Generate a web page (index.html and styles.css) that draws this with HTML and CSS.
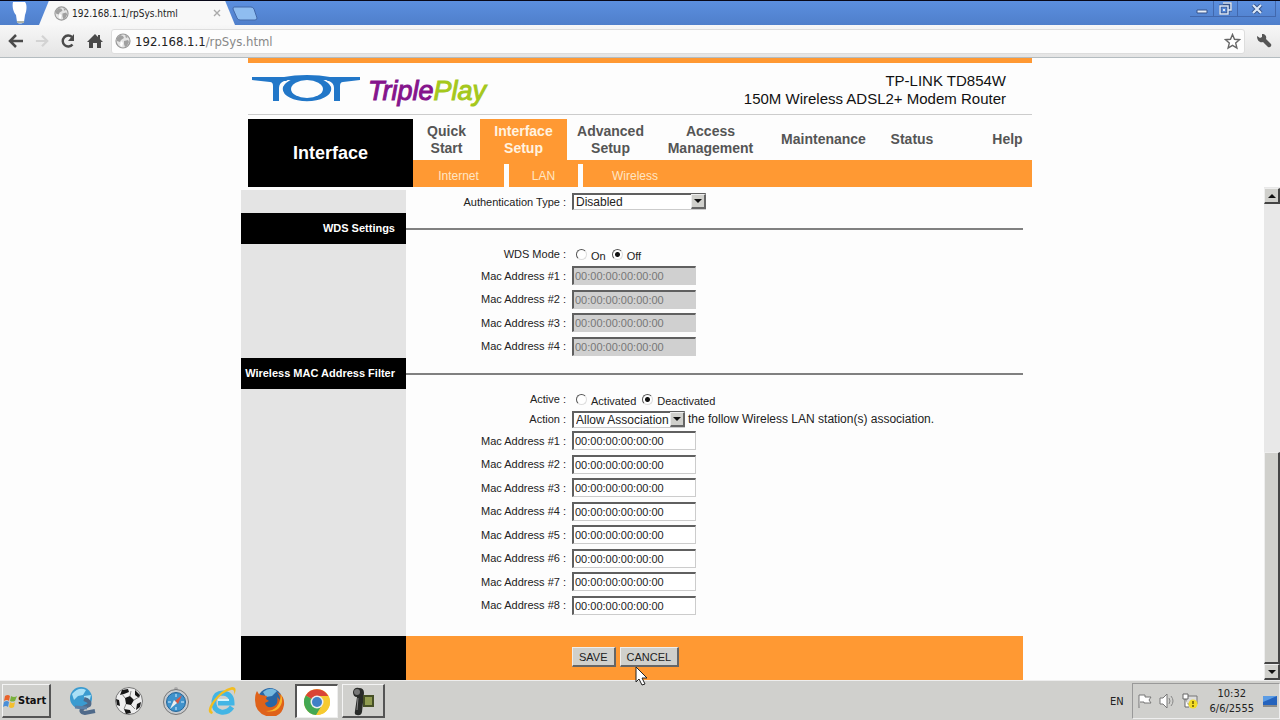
FILE: index.html
```
<!DOCTYPE html>
<html lang="en">
<head>
  <meta charset="UTF-8">
  <meta name="viewport" content="width=device-width, initial-scale=1.0">
  <title>192.168.1.1/rpSys.html</title>
  <link rel="stylesheet" href="styles.css">
</head>
<body>
  <svg class="defs" width="0" height="0" aria-hidden="true">
    <symbol id="globe" viewBox="0 0 16 16">
      <circle cx="8" cy="8" r="7" fill="#e4e4e4" stroke="#999" stroke-width="1.2"/>
      <path d="M2 5l3-3 3 1 1 2-3 2-1 2-3-1zM9 8l4-1 1 2-2 4-2 1-1-3zM10 2l3 2-2 1z" fill="#a0a0a0"/>
      <path d="M6 8l2 2-1 4-2-2z" fill="#fff"/>
    </symbol>
  </svg>

  <!-- Browser -->
  <div class="titlebar">
    <svg class="profile" width="18" height="23" viewBox="0 0 18 23"><path d="M2 1h12c2 2 2 8 0 13l-1 7c-2 2-6 2-7 0L5 14C2 11 1 5 2 1z" fill="#fff"/><path d="M6 20h7v2H6z" fill="#b0b5aa"/></svg>
    <div class="tab">
      <svg width="15" height="15"><use href="#globe"/></svg>
      <span class="tab-title">192.168.1.1/rpSys.html</span>
      <button class="tab-close" aria-label="Close tab"><svg width="8" height="8" viewBox="0 0 8 8"><path d="M1 1l6 6M7 1L1 7" stroke="#aaa" stroke-width="1.4"/></svg></button>
    </div>
    <button class="new-tab" aria-label="New tab"><svg width="26" height="15" viewBox="0 0 26 15"><path d="M2 1h17q2 0 3 2l3 9q0 2-2 2H8q-2 0-3-2L1 3q0-2 1-2z" fill="#8fbdf0" stroke="#4268a8"/></svg></button>
    <div class="window-buttons">
      <button aria-label="Minimize"><svg width="12" height="12" viewBox="0 0 12 12"><path d="M1 7h10v3H1z" fill="#e8f0fa" stroke="#36538a"/></svg></button>
      <button aria-label="Restore"><svg width="13" height="13" viewBox="0 0 13 13"><path d="M4 1h8v7H9M1 4h8v8H1z" fill="none" stroke="#36538a" stroke-width="3"/><path d="M4 1h8v7H9M1 4h8v8H1z" fill="none" stroke="#dce8f8" stroke-width="1.5"/><path d="M4 7h2v2H4z" fill="#dce8f8"/></svg></button>
      <button class="wide" aria-label="Close"><svg width="12" height="10" viewBox="0 0 12 10"><path d="M2 1l8 8M10 1L2 9" stroke="#36538a" stroke-width="4"/><path d="M2 1l8 8M10 1L2 9" stroke="#dce8f8" stroke-width="2.2"/></svg></button>
    </div>
  </div>
  <div class="toolbar">
    <button aria-label="Back"><svg width="16" height="14" viewBox="0 0 16 14"><path d="M8 1L2 7l6 6M2 7h13" fill="none" stroke="#4a4a4a" stroke-width="2.5"/></svg></button>
    <button aria-label="Forward"><svg width="14" height="14" viewBox="0 0 16 14"><path d="M8 1l6 6-6 6M14 7H1" fill="none" stroke="#d3d3d3" stroke-width="2.5"/></svg></button>
    <button aria-label="Reload"><svg width="16" height="16" viewBox="0 0 16 16"><path d="M12.500 11.500A5.500 5.500 0 1 1 12 4" fill="none" stroke="#4a4a4a" stroke-width="2.400"/><path d="M14 1v7H8z" fill="#4a4a4a"/></svg></button>
    <button aria-label="Home"><svg width="16" height="16" viewBox="0 0 16 16"><path d="M8 1L0 9h2v6h4v-5h4v5h4V9h2l-3-3V2h-2v2z" fill="#4a4a4a"/></svg></button>
    <div class="omnibox">
      <svg width="16" height="16"><use href="#globe"/></svg>
      <span class="url">192.168.1.1<span class="path">/rpSys.html</span></span>
      <button aria-label="Bookmark"><svg width="17" height="17" viewBox="0 0 17 17"><path d="M8.500 1.500l2 4.800 5 .4-3.800 3.400 1.200 5-4.400-2.700-4.400 2.700 1.200-5L1.500 6.700l5-.4z" fill="#fff" stroke="#666" stroke-width="1.400"/></svg></button>
    </div>
    <button class="wrench" aria-label="Settings"><svg width="16" height="16" viewBox="0 0 16 16"><path d="M1 3l3 2 2-1V1c3 0 5 2 4 5l5 5c1 2-1 4-3 3L7 9C4 10 1 8 1 3z" fill="#555"/></svg></button>
  </div>

  <!-- Router page -->
  <header class="masthead">
    <div class="brand">
      <svg class="logo" width="110" height="28" viewBox="0 0 110 28" role="img" aria-label="TOT">
        <path d="M1 2h108v3L92 7q-3 0-3 4v15h-6V13q0-5-5-7H33q-5 2-5 7v13h-6V11q0-4-3-4L1 5z" fill="#2277c8"/>
        <ellipse cx="56" cy="14" rx="25" ry="13" fill="#2277c8" stroke="#fdfdfd" stroke-width="1.500"/>
        <path d="M33 2q10-2 23-2t23 2l-4 3H37z" fill="#2277c8"/>
        <ellipse cx="56" cy="14" rx="16" ry="9" fill="#fdfdfd"/>
      </svg>
      <span class="tripleplay"><span class="triple">Triple</span><span class="play">Play</span></span>
      <p class="model">TP-LINK TD854W<br>150M Wireless ADSL2+ Modem Router</p>
    </div>
    <div class="nav">
      <h1>Interface</h1>
      <div class="nav-menus">
        <nav class="menu">
          <a href="#" class="quick">Quick<br>Start</a>
          <a href="#" class="active">Interface<br>Setup</a>
          <a href="#">Advanced<br>Setup</a>
          <a href="#" class="large">Access<br>Management</a>
          <a href="#" class="large">Maintenance</a>
          <a href="#" class="status">Status</a>
          <a href="#" class="help">Help</a>
        </nav>
        <nav class="submenu">
          <a href="#" class="internet">Internet</a>
          <a href="#" class="lan">LAN</a>
          <a href="#" class="wireless">Wireless</a>
        </nav>
      </div>
    </div>
  </header>

  <div class="frame">
    <form class="settings">
      <div class="section">
        <div class="row auth">
          <label for="auth">Authentication Type :</label>
          <span class="drop auth-type"><select id="auth"><option>Disabled</option></select><i></i></span>
        </div>
      </div>

      <h2><span>WDS Settings</span></h2>
      <div class="section">
        <div class="row">
          <span class="label">WDS Mode :</span>
          <label class="choice"><input type="radio" name="wds"><span>On</span></label>
          <label class="choice"><input type="radio" name="wds" checked><span>Off</span></label>
        </div>
        <div class="macs">
          <div class="row"><label for="wds1">Mac Address #1 :</label><input type="text" id="wds1" value="00:00:00:00:00:00" disabled></div>
          <div class="row"><label for="wds2">Mac Address #2 :</label><input type="text" id="wds2" value="00:00:00:00:00:00" disabled></div>
          <div class="row"><label for="wds3">Mac Address #3 :</label><input type="text" id="wds3" value="00:00:00:00:00:00" disabled></div>
          <div class="row"><label for="wds4">Mac Address #4 :</label><input type="text" id="wds4" value="00:00:00:00:00:00" disabled></div>
        </div>
      </div>

      <h2><span>Wireless MAC Address Filter</span></h2>
      <div class="section filter">
        <div class="row">
          <span class="label">Active :</span>
          <label class="choice"><input type="radio" name="filter"><span>Activated</span></label>
          <label class="choice"><input type="radio" name="filter" checked><span>Deactivated</span></label>
        </div>
        <div class="row">
          <label for="action">Action :</label>
          <span class="drop action-type"><select id="action"><option>Allow Association</option></select><i></i></span>
          <span class="note">the follow Wireless LAN station(s) association.</span>
        </div>
        <div class="macs">
          <div class="row"><label for="mac1">Mac Address #1 :</label><input type="text" id="mac1" value="00:00:00:00:00:00"></div>
          <div class="row"><label for="mac2">Mac Address #2 :</label><input type="text" id="mac2" value="00:00:00:00:00:00"></div>
          <div class="row"><label for="mac3">Mac Address #3 :</label><input type="text" id="mac3" value="00:00:00:00:00:00"></div>
          <div class="row"><label for="mac4">Mac Address #4 :</label><input type="text" id="mac4" value="00:00:00:00:00:00"></div>
          <div class="row"><label for="mac5">Mac Address #5 :</label><input type="text" id="mac5" value="00:00:00:00:00:00"></div>
          <div class="row"><label for="mac6">Mac Address #6 :</label><input type="text" id="mac6" value="00:00:00:00:00:00"></div>
          <div class="row"><label for="mac7">Mac Address #7 :</label><input type="text" id="mac7" value="00:00:00:00:00:00"></div>
          <div class="row"><label for="mac8">Mac Address #8 :</label><input type="text" id="mac8" value="00:00:00:00:00:00"></div>
        </div>
      </div>

      <div class="actions">
        <button type="button">SAVE</button>
        <button type="button">CANCEL</button>
      </div>
    </form>
    <div class="scrollbar">
      <button class="up" aria-label="Scroll up"></button>
      <div class="track"><div class="thumb"></div></div>
      <button class="down" aria-label="Scroll down"></button>
    </div>
  </div>

  <!-- Taskbar -->
  <div class="taskbar">
    <button class="start"><svg width="14" height="14" viewBox="0 0 14 14"><path d="M2 2q3-2 5 0L6 7Q4 5 1 7z" fill="#e8622a"/><path d="M8 2q3 2 6 0l-2 5q-3 1-5 0z" fill="#79b03c"/><path d="M1 8q3-2 5 0l-1 5q-2-2-5 0z" fill="#4a8fd8"/><path d="M7 8q3 2 5 0l-1 5q-3 2-5 0z" fill="#f4bf2e"/></svg>Start</button>
    <button class="app" aria-label="Network"><svg width="30" height="30" viewBox="0 0 30 30"><circle cx="14" cy="12" r="11" fill="#3a9bd0"/><path d="M5 8q7-8 14-4l-3 5-5 1-4 4zM17 10l7-1-2 8-5-3z" fill="#a9e0f6"/><path d="M17 13q7 2 5 6l-6 3q-4 4 2 5l10-2" fill="none" stroke="#4f6a8a" stroke-width="4"/><path d="M8 21l12 1" stroke="#5b7fa5" stroke-width="3"/></svg></button>
    <button class="app" aria-label="Football"><svg width="30" height="30" viewBox="0 0 30 30"><circle cx="15" cy="15" r="13.500" fill="#eee" stroke="#777"/><path d="M11 12l5-2 4 4-3 5-5-1zM8 4l6-1 1 3-5 2-4 1zM21 4l5 5-1 3-4-3zM2 13l3 1 1 6-3-1zM10 23l6 1 1 3-5 1zM23 18l4-2-1 5-4 3z" fill="#161616"/><path d="M11 12L8 8M16 10l1-5M20 14l5-3M17 19l4 4M12 18l-2 5" stroke="#888"/></svg></button>
    <button class="app" aria-label="Safari"><svg width="30" height="30" viewBox="0 0 30 30"><circle cx="15" cy="3" r="2" fill="#aaa"/><circle cx="15" cy="16" r="12.500" fill="#c7cbd0" stroke="#777"/><circle cx="15" cy="16" r="9.500" fill="#3e92cc" stroke="#246699"/><path d="M15 8v3M15 21v3M7 16h3M20 16h3" stroke="#d7f0ff"/><path d="M21 9l-4 9-3-3z" fill="#d75745"/><path d="M9 23l4-9 3 3z" fill="#eee"/></svg></button>
    <button class="app" aria-label="Internet Explorer"><svg width="32" height="30" viewBox="0 0 32 30"><path d="M25 21Q21 27 14 26 6 24 7 15 8 7 16 7q9 1 9 10H11" fill="none" stroke="#42b5e5" stroke-width="5"/><path d="M11 14h11" stroke="#d2f4ff" stroke-width="2"/><path d="M5 28Q-2 26 6 15 15 3 25 1q6 0 2 8 1-6-3-5Q15 6 8 16 2 25 6 26z" fill="#f3bd20"/></svg></button>
    <button class="app" aria-label="Firefox"><svg width="30" height="30" viewBox="0 0 30 30"><circle cx="15" cy="14" r="12" fill="#2866a5"/><path d="M8 6q7-6 14-1l-5 5-6 1z" fill="#76b9df"/><path d="M2 5q1 3 4 4l6 1-1 3 3 2-4 2q1 5 7 4 7-2 5-10l3 3q0-5-3-8 8 4 7 13-2 12-14 12Q0 28 0 14q0-6 2-9z" fill="#df621a"/><path d="M26 8q3 8-2 14-5 5-13 3 14 0 15-17z" fill="#f8b52b"/></svg></button>
    <button class="app current" aria-label="Chrome"><svg width="28" height="28" viewBox="0 0 28 28"><circle cx="14" cy="14" r="13" fill="#f6ca30"/><path d="M14 14L2.700 7.500A13 13 0 0 1 25.300 8z" fill="#da4436"/><path d="M14 14L2.700 7.500A13 13 0 0 0 13 27l6-10z" fill="#43a853"/><path d="M14 8h11.500A13 13 0 0 1 14 27l6-11z" fill="#f6ca30"/><circle cx="14" cy="14" r="6.500" fill="#eee"/><circle cx="14" cy="14" r="5" fill="#407fc7"/></svg></button>
    <button class="app open" aria-label="Camcorder"><svg width="30" height="30" viewBox="0 0 30 30"><path d="M5 6q1-5 6-4 5 0 5 5l-2 19q-1 4-5 3-3 0-2-4L9 11q-4 0-4-5z" fill="#292b29"/><circle cx="9" cy="6" r="3" fill="#777"/><path d="M15 9h11v12H15z" fill="#465026"/><path d="M17 11h7v8h-7z" fill="#8f9b50"/><path d="M10 12l-1 12" stroke="#888"/></svg></button>
    <span class="lang">EN</span>
    <div class="tray">
      <svg width="16" height="16" viewBox="0 0 16 16"><path d="M2 15V2h6v2h6l-2 3 2 3H7V9H3" fill="#fff" stroke="#777"/></svg>
      <svg width="17" height="16" viewBox="0 0 17 16"><path d="M1 5h3l4-4v14l-4-4H1z" fill="#fff" stroke="#777"/><path d="M10 5q2 3 0 6M12 3q4 5 0 10" fill="none" stroke="#888"/></svg>
      <svg width="17" height="16" viewBox="0 0 17 16"><path d="M4 3h11v8H4z" fill="#ddd" stroke="#777"/><path d="M1 1h5v5H1zM3 6v8h4" fill="#fff" stroke="#666"/><circle cx="11" cy="11" r="4.500" fill="#f2dc27"/><path d="M11 8v3M11 12v2" stroke="#6a5a00" stroke-width="1.500"/></svg>
      <div class="clock">10:32<br>6/6/2555</div>
      <svg width="15" height="13" viewBox="0 0 15 13"><path d="M1 1h14v9H1z" fill="#2563bd"/><path d="M1 1h14L1 7z" fill="#5b9ce5"/><path d="M1 11h14" stroke="#444"/></svg>
    </div>
  </div>

  <svg class="pointer" width="13" height="21" viewBox="0 0 13 21"><path d="M1 1v15l3-3 3 6 3-1-3-6h5z" fill="#fff" stroke="#222"/></svg>
</body>
</html>
```
FILE: styles.css
```
/* Global Styles */
* {
  box-sizing: border-box;
}

body {
  margin: 0;
  height: 100vh;
  display: flex;
  flex-direction: column;
  overflow: hidden;
  background: #fdfdfd;
  color: #222;
  font-family: "Liberation Sans", Arial, sans-serif;
  font-size: 12px;
}

button {
  padding: 0;
  border: 0;
  background: none;
  font: inherit;
  color: inherit;
}

svg {
  display: block;
  flex: none;
}

.defs {
  position: absolute;
}

/* Browser */
.titlebar {
  display: flex;
  height: 25px;
  flex: none;
  border-top: 1px solid #080818;
  background: linear-gradient(#5b8fdf, #4f7fcb);
  font-family: "DejaVu Sans Condensed", "DejaVu Sans", sans-serif;
}

.profile {
  margin: 0 10px 0 11px;
}

.tab {
  display: flex;
  align-items: center;
  width: 196px;
  padding: 0 14px 0 15px;
  background: #f8f8f8;
  clip-path: polygon(5% 0, 95% 0, 100% 100%, 0 100%);
}

.tab-title {
  flex: 1;
  padding-left: 3px;
  font-size: 10px;
}

.new-tab {
  align-self: flex-start;
  margin: 5px 0 0 -3px;
}

.window-buttons {
  display: flex;
  align-self: flex-start;
  margin: 0 4px 0 auto;
}

.window-buttons button {
  display: flex;
  justify-content: center;
  align-items: center;
  width: 24px;
  height: 16px;
  border: 1px solid #4268ad;
  border-top: 0;
  border-left-width: 0;
}

.window-buttons .wide {
  width: 38px;
}

.toolbar {
  display: flex;
  align-items: center;
  gap: 11px;
  height: 33px;
  flex: none;
  padding: 0 8px;
  border-bottom: 1px solid #b4bcc0;
  background: linear-gradient(#f7f7f7, #e4e4e4);
}

.omnibox {
  display: flex;
  align-items: center;
  flex: 1;
  height: 25px;
  margin-left: -3px;
  padding: 0 3px;
  border: 1px solid #ddd;
  border-radius: 3px;
  background: #fdfdfd;
}

.url {
  flex: 1;
  padding-left: 4px;
  font-family: "DejaVu Sans Condensed", "DejaVu Sans", sans-serif;
  font-size: 13px;
}

.path {
  color: #888;
}

/* Page header */
.masthead {
  width: 100%;
  max-width: 784px;
  flex: none;
  margin: 0 auto;
  border-top: 5px solid #ff9933;
}

.brand {
  display: flex;
  align-items: center;
  height: 52px;
  margin-bottom: 4px;
  padding: 0 26px 0 3px;
  border-bottom: 1px solid #ccc;
}

.tripleplay {
  padding: 6px 0 0 7px;
  font-size: 27px;
  font-style: italic;
  -webkit-text-stroke: 1px;
}

.triple {
  color: #85148c;
}

.play {
  color: #a5c81c;
}

.model {
  margin: 2px 0 0 auto;
  color: #111;
  font-size: 15px;
  line-height: 18px;
  text-align: right;
}

.nav {
  display: flex;
}

.nav h1 {
  display: flex;
  align-items: center;
  justify-content: center;
  width: 165px;
  margin: 0;
  background: #000;
  color: #fff;
  font-size: 18px;
}

.nav-menus {
  flex: 1;
}

.nav a {
  text-decoration: none;
}

.menu {
  display: flex;
  height: 41px;
}

.menu a {
  display: flex;
  align-items: center;
  justify-content: center;
  width: 87px;
  color: #555;
  font-size: 14px;
  font-weight: bold;
  line-height: 17px;
  text-align: center;
}

.menu .quick {
  width: 67px;
}

.menu .large {
  width: 113px;
}

.menu .status {
  width: 64px;
}

.menu .help {
  margin-left: auto;
  width: 49px;
}

.menu .active {
  background: #ff9933;
  color: #fff3e0;
}

.submenu {
  display: flex;
  height: 27px;
  padding-top: 4px;
  background: #ff9933;
}

.submenu a {
  padding-top: 5px;
  color: #ffe6c4;
  text-align: center;
}

.submenu .internet {
  width: 96px;
  border-right: 5px solid #fdfdfd;
}

.submenu .lan {
  width: 74px;
  border-right: 5px solid #fdfdfd;
}

.submenu .wireless {
  width: 104px;
}

/* Settings form */
.frame {
  display: flex;
  flex: 1;
  min-height: 0;
}

.settings {
  display: flex;
  flex-direction: column;
  flex: 1;
  max-width: 782px;
  margin: 0 auto;
  padding-top: 3px;
}

.section {
  border-left: 165px solid #e4e4e4;
}

.filter {
  padding-bottom: 19px;
}

.settings h2 {
  display: flex;
  align-items: center;
  margin: 0;
  color: #fff;
  font-size: 11px;
}

.settings h2 span {
  width: 165px;
  padding-right: 11px;
  background: #000;
  line-height: 31px;
  text-align: right;
  white-space: nowrap;
}

.settings h2::after {
  content: "";
  flex: 1;
  border-top: 2px solid #808080;
}

.row {
  display: flex;
  align-items: center;
  height: 20px;
}

.row.auth {
  height: 23px;
}

.macs .row {
  height: 23px;
}

.macs .row:nth-child(even) {
  height: 24px;
}

.row > label:first-child,
.label {
  width: 160px;
  margin-right: 6px;
  font-size: 11px;
  text-align: right;
}

.row input[type="text"] {
  width: 124px;
  height: 19px;
  padding: 0 1px;
  border: 1px solid #ccc;
  border-top: 2px solid #606060;
  border-left: 2px solid #606060;
  border-radius: 0;
  background: #fff;
  color: #222;
  font: inherit;
  font-size: 11px;
}

.row input[type="text"]:disabled {
  border-color: #606060 #d0d0d0 #d0d0d0 #606060;
  background: #d0d0d0;
  color: #777;
}

.row .choice {
  display: flex;
  align-items: center;
  margin-right: 6px;
  font-size: 11px;
}

.choice span {
  padding-top: 3px;
}

.choice input {
  appearance: none;
  width: 11px;
  height: 11px;
  margin: 0 4px;
  border: 1px solid;
  border-color: #555 #ddd #ddd #555;
  border-radius: 50%;
  background: #fff;
}

.choice input:checked {
  background: radial-gradient(circle, #111 2px, #fff 3px);
}

.choice + .choice input {
  margin-left: 0;
}

.drop {
  position: relative;
  display: flex;
}

.drop select {
  appearance: none;
  width: 100%;
  height: 17px;
  padding: 0 2px;
  border: 1px solid #ccc;
  border-top: 2px solid #606060;
  border-left: 2px solid #606060;
  border-radius: 0;
  background: #fff;
  color: #222;
  font: inherit;
}

.drop i {
  position: absolute;
  top: 1px;
  right: 0;
  display: flex;
  align-items: center;
  justify-content: center;
  width: 15px;
  height: 15px;
  border: 1px solid #eee;
  border-right: 2px solid #666;
  border-bottom: 2px solid #666;
  background: #d0d0cc;
  pointer-events: none;
}

.drop i::after,
.up::after,
.down::after {
  content: "";
  border: 4px solid transparent;
  border-top-color: #111;
  border-bottom: 0;
}

.auth-type {
  width: 134px;
}

.action-type {
  width: 113px;
}

.note {
  padding-left: 3px;
  white-space: nowrap;
}

.actions {
  display: flex;
  align-items: flex-start;
  flex: 1;
  gap: 4px;
  padding: 11px 0 0 166px;
  border-left: 165px solid #000;
  background: #ff9933;
}

.actions button {
  height: 20px;
  padding: 0 6px;
  border: 1px solid #eee;
  border-right: 2px solid #666;
  border-bottom: 2px solid #666;
  background: #d0d0cc;
  font-size: 11px;
}

/* Scrollbar */
.scrollbar {
  display: flex;
  flex-direction: column;
  width: 16px;
  padding-top: 1px;
  background: #e8e8e8;
}

.up,
.down {
  display: flex;
  align-items: center;
  justify-content: center;
  height: 16px;
  border: 1px solid #eee;
  border-right: 2px solid #444;
  border-bottom: 2px solid #444;
  background: #d0d0cc;
}

.up::after {
  transform: rotate(180deg);
}

.track {
  display: flex;
  flex-direction: column;
  justify-content: flex-end;
  flex: 1;
}

.thumb {
  height: 46%;
  border: 1px solid #eee;
  border-right: 2px solid #444;
  border-bottom: 2px solid #444;
  background: #d0d0cc;
}

/* Taskbar */
.taskbar {
  display: flex;
  align-items: center;
  flex: none;
  height: 40px;
  padding: 1px 0 0 2px;
  border-top: 1px solid #eee;
  background: #d0d0cd;
  font-family: "DejaVu Sans Condensed", "DejaVu Sans", sans-serif;
  font-size: 11px;
}

.start {
  display: flex;
  align-items: center;
  gap: 1px;
  width: 49px;
  height: 34px;
  margin-right: 9px;
  border: 1px solid #f4f4f4;
  border-right: 2px solid #555;
  border-bottom: 2px solid #555;
  color: #111;
  font-weight: bold;
}

.app {
  display: flex;
  align-items: center;
  justify-content: center;
  width: 43px;
  height: 34px;
  margin-right: 4px;
}

.current {
  border: 1px solid #eee;
  border-top: 2px solid #555;
  border-left: 2px solid #555;
  background: #fff;
}

.open {
  border: 1px solid #f4f4f4;
  border-right: 2px solid #555;
  border-bottom: 2px solid #555;
}

.lang {
  margin-left: auto;
  padding-right: 8px;
}

.tray {
  display: flex;
  align-items: center;
  gap: 6px;
  height: 36px;
  padding: 0 2px 0 4px;
  border: 1px solid #999;
  border-right-color: #eee;
  border-bottom-color: #eee;
}

.clock {
  padding: 0 2px 0 5px;
  line-height: 15px;
  text-align: center;
}

.pointer {
  position: absolute;
  left: 635px;
  top: 666px;
}
```
